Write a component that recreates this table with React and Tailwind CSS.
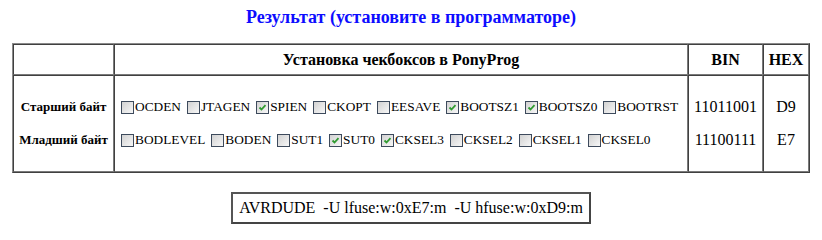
const high = [
  ['OCDEN', false],
  ['JTAGEN', false],
  ['SPIEN', true],
  ['CKOPT', false],
  ['EESAVE', false],
  ['BOOTSZ1', true],
  ['BOOTSZ0', true],
  ['BOOTRST', false],
];

const low = [
  ['BODLEVEL', false],
  ['BODEN', false],
  ['SUT1', false],
  ['SUT0', true],
  ['CKSEL3', true],
  ['CKSEL2', false],
  ['CKSEL1', false],
  ['CKSEL0', false],
];

// old-style windows checkbox
const Box = ({ checked }) => (
  <span className="inline-block shrink-0 w-[13px] h-[13px] border border-[#3d4a5c] bg-gradient-to-br from-[#d2d2d2] to-[#f7f7f7] mr-[1px] relative">
    {checked && (
      <svg viewBox="0 0 11 11" className="absolute inset-0 w-[11px] h-[11px]">
        <path d="M2.5 5.5 L4.5 7.5 L8.5 3.2" fill="none" stroke="#2f9a2f" strokeWidth="1.8" />
      </svg>
    )}
  </span>
);

const FuseRow = ({ items }) => (
  <div className="flex items-center gap-[6px] whitespace-nowrap leading-[20px]">
    {items.map(([name, on]) => (
      <label key={name} className="flex items-center">
        <Box checked={on} />
        <span>{name}</span>
      </label>
    ))}
  </div>
);

const cell = 'border border-t-[#404040] border-l-[#404040] border-b-[#7a7a7a] border-r-[#7a7a7a]';

export default function App() {
  return (
    <div className="bg-white text-black w-[822px] h-[240px] pt-[6px]" style={{ fontFamily: '"Liberation Serif", "Times New Roman", serif' }}>
      <h2 className="text-center text-[18px] font-bold text-[#0d0dff] leading-[22px]">
        Результат (установите в программаторе)
      </h2>

      <table className="ml-[12px] mt-[15px] w-[796px] table-fixed border-separate border-spacing-0 border border-t-[#8a8a8a] border-l-[#8a8a8a] border-b-[#404040] border-r-[#404040]">
        <colgroup>
          <col className="w-[101px]" />
          <col className="w-[574px]" />
          <col className="w-[75px]" />
          <col className="w-[46px]" />
        </colgroup>
        <thead>
          <tr className="h-[31px]">
            <th className={cell}></th>
            <th className={`${cell} text-[16px] font-bold`}>Установка чекбоксов в PonyProg</th>
            <th className={`${cell} text-[16px] font-bold`}>BIN</th>
            <th className={`${cell} text-[16px] font-bold`}>HEX</th>
          </tr>
        </thead>
        <tbody>
          <tr className="h-[97px]">
            <td className={`${cell} text-[13px] font-bold text-center`}>
              <div className="flex flex-col gap-[13px] leading-[20px]">
                <span>Старший байт</span>
                <span>Младший байт</span>
              </div>
            </td>
            <td className={`${cell} px-[6px] text-[13.33px]`}>
              <div className="flex flex-col gap-[13px]">
                <FuseRow items={high} />
                <FuseRow items={low} />
              </div>
            </td>
            <td className={`${cell} text-[16px] text-center`}>
              <div className="flex flex-col gap-[13px] leading-[20px]">
                <span>11011001</span>
                <span>11100111</span>
              </div>
            </td>
            <td className={`${cell} text-[16px] text-center`}>
              <div className="flex flex-col gap-[13px] leading-[20px]">
                <span>D9</span>
                <span>E7</span>
              </div>
            </td>
          </tr>
        </tbody>
      </table>

      <div className="flex justify-center mt-[19px]">
        <div className="border-2 border-t-[#555] border-l-[#555] border-b-[#444] border-r-[#444] px-[6px] h-[32px] flex items-center text-[16px] whitespace-pre">
          AVRDUDE  -U lfuse:w:0xE7:m  -U hfuse:w:0xD9:m
        </div>
      </div>
    </div>
  );
}
